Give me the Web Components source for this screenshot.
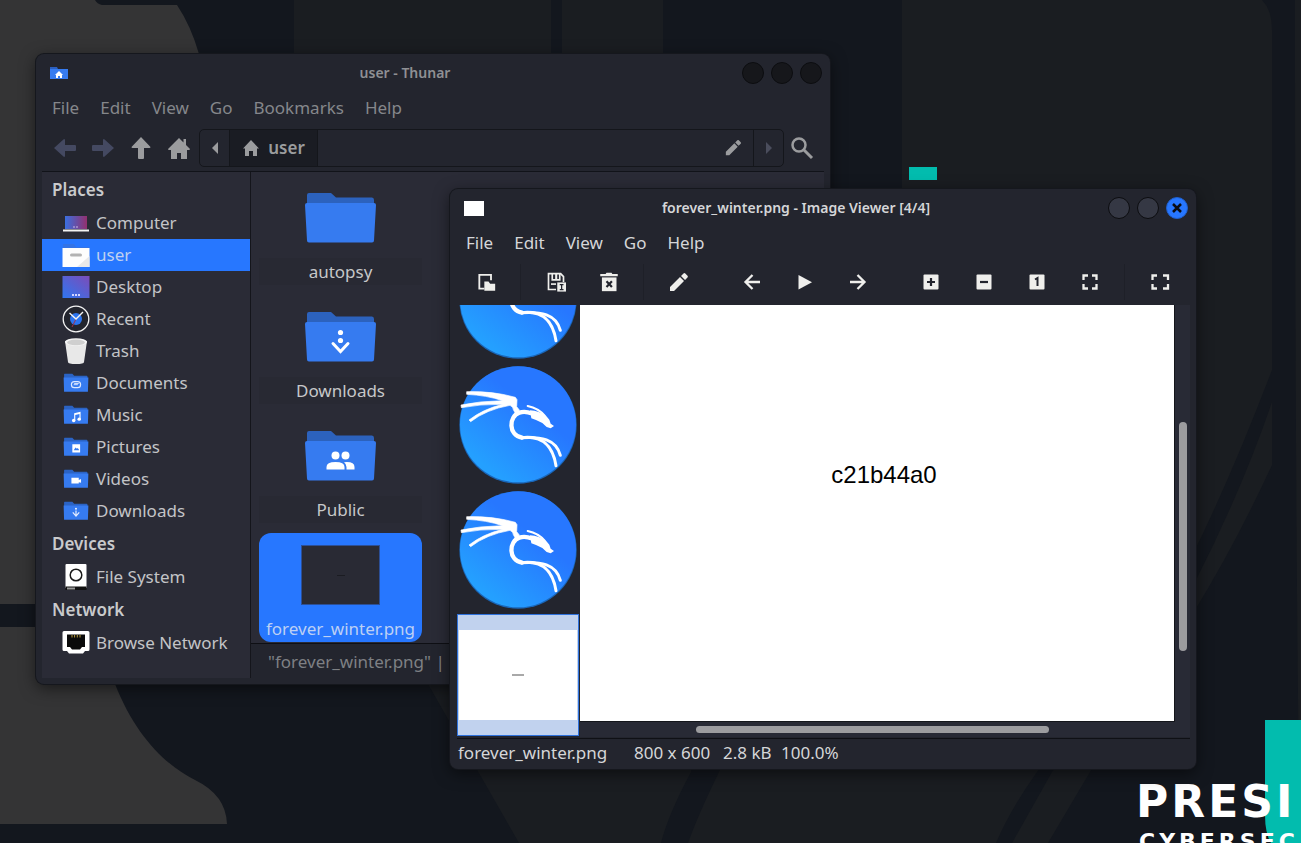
<!DOCTYPE html>
<html lang="en">
<head>
<meta charset="utf-8">
<title>Desktop</title>
<style>
  html, body { margin: 0; height: 100%; background: #13171e; }
  body { font: 17px/24px "Noto Sans", "Open Sans", sans-serif; color: #c9cacd; overflow: hidden; }
</style>
</head>
<body>
<desk-top>
  <desk-window slot="windows" class="files" inactive>
    <span slot="title">user - Thunar</span>
    <ui-icon slot="icon" name="home-folder" style="--w:18px;--h:16px"></ui-icon>
    <file-manager></file-manager>
  </desk-window>
  <desk-window slot="windows" class="viewer">
    <span slot="title">forever_winter.png - Image Viewer [4/4]</span>
    <ui-icon slot="icon" name="blank" style="--w:20px;--h:15px"></ui-icon>
    <image-viewer></image-viewer>
  </desk-window>
</desk-top>

<script>
const folder = (mark) => ['-1 -1 30 24', `
  <path d="M1 1.500Q1 1 1.500 1H10l2 2h13.500q1 0 1 1v6H1z" fill="#2b63c4"/>
  <path d="M.5 5h27L27 20.500H1z" fill="#367bf0"/>${mark}`];
const bigFolder = (mark) => ['0 0 71 50', `
  <path d="M2 2Q2 0 4 0H26L31 4.500H67Q69 4.500 69 7V16H2z" fill="#2c62bd"/>
  <path d="M0 12Q0 10 2 10H69Q71 10 71 12L69 47.500Q69 49.500 67 49.500H4Q2 49.500 2 47.500z" fill="#367bf0"/>${mark}`];

const ICONS = {
  'home-folder': ['0 0 18 16', '<path d="M0 2h7l1 2h10v4H0z" fill="#2b5fc0"/><path d="M0 4h18v10H0z" fill="#367bf0"/><path d="M9 6l4 4h-1v3h-2v-2H8v2H6v-3H5z" fill="#fff"/>'],
  'blank': ['0 0 20 15', '<path d="M0 0h20v15H0z" fill="#fff"/>'],
  'left': ['0 0 24 24', '<path d="M1 12L11 3q1 0 1 1v5h10q1 0 1 1v4q0 1-1 1H12v5q0 1-1 1z" fill="#444961"/>'],
  'right': ['0 0 24 24', '<path d="M23 12L13 3q-1 0-1 1v5H2q-1 0-1 1v4q0 1 1 1h10v5q0 1 1 1z" fill="#444961"/>'],
  'up': ['0 0 24 24', '<path d="M12 1l9.500 10q0 1-1 1H15v10q0 1-1 1h-4q-1 0-1-1V12H3.500q-1 0-1-1z" fill="currentColor"/>'],
  'home': ['0 0 24 24', '<path d="M12 2l4.500 4.500V3H19v6l4 4q0 1-1 1h-2v9h-6v-6h-4v6H4v-9H2q-1 0-1-1z" fill="currentColor"/>'],
  'house': ['0 0 18 18', '<path d="M9 1l8 8.500H15V17h-4v-5H7v5H3V9.500H1z" fill="currentColor"/>'],
  'tri-left': ['0 0 12 12', '<path d="M9 0v12L3 6z" fill="currentColor"/>'],
  'tri-right': ['0 0 12 12', '<path d="M3 0v12l6-6z" fill="currentColor"/>'],
  'pencil': ['0 0 20 20', '<path d="M1 15v4h4L15 9l-4-4zM12 4l4 4 2.500-2.500q.8-1 0-1.800L16.300 1.500q-1-.8-1.800 0z" fill="currentColor"/>'],
  'search': ['0 0 24 24', '<circle cx="9" cy="9" r="6.500" fill="none" stroke="currentColor" stroke-width="2.500"/><path d="M14 14l8 8" stroke="currentColor" stroke-width="3"/>'],
  'computer': ['0 0 28 28', '<defs><linearGradient id="g"><stop stop-color="#3a6fe0"/><stop offset="1" stop-color="#93306e"/></linearGradient></defs><path d="M3 7h22v13H3z" fill="url(#g)"/><path d="M1 20.500h26v2H1z" fill="#f3f3f3"/><path d="M11 17.500h2v1h-2zM14 17.500h2v1h-2z" fill="#c9b7e8"/>'],
  'user': ['0 2 28 28', '<path d="M1 5h11l2 3h13v3H1z" fill="#3373e6"/><path d="M.5 9h27v19H.5z" fill="#fdfdfd"/><path d="M27.500 17v11H15z" fill="#e9e9e9"/><rect x="8" y="14.500" width="12" height="3" rx="1.500" fill="#b3b3b3"/>'],
  'desktop': ['0 0 28 28', '<defs><linearGradient id="g" x1="0" y1="1" x2="1" y2="0"><stop stop-color="#2f76f0"/><stop offset="1" stop-color="#7c4cb8"/></linearGradient></defs><path d="M.5 3h27v22H.5z" fill="url(#g)"/><path d="M10 21h2v2h-2zM13 21h2v2h-2zM16 21h2v2h-2z" fill="#d6d6ff"/>'],
  'recent': ['0 0 28 28', '<circle cx="14" cy="14" r="12.800" fill="#23252e" stroke="#f4f4f4" stroke-width="1.300"/><circle cx="14" cy="14" r="6" fill="#2b74f0"/><path d="M14 14l-4 8" stroke="#a33048"/><path d="M7.500 8L14 14l7-7" fill="none" stroke="#f4f4f4" stroke-width="1.400"/>'],
  'trash': ['0 0 28 28', '<path d="M3 4l3 21q0 2 8 2t8-2L25 4z" fill="#e8e8e8"/><ellipse cx="14" cy="5" rx="11" ry="3.800" fill="#f5f5f5"/><ellipse cx="14" cy="5.400" rx="9" ry="2.800" fill="#cfcfcf"/>'],
  'documents': folder('<rect x="9" y="9.500" width="10" height="6.500" rx="3.200" fill="none" stroke="#dce8ff" stroke-width="1.300"/><path d="M11.500 12.800h4.500M12 11.500h5" stroke="#dce8ff"/>'),
  'music': folder('<path d="M12 9l7-1.500v8h-1.200V10l-4.600 1v6H12z" fill="#fff"/><circle cx="11.500" cy="17" r="1.900" fill="#fff"/><circle cx="17.500" cy="15.500" r="1.900" fill="#fff"/>'),
  'pictures': folder('<path d="M10 8h8.500v9H10z" fill="#fff"/><path d="M11.500 14.500l2-3 1.500 1.500 1-1 1.500 2.500z" fill="#367bf0"/>'),
  'videos': folder('<path d="M9 9.500h8V12l2.500-1v4L17 14.500V16H9z" fill="#fff"/>'),
  'downloads': folder('<circle cx="14" cy="8.500" r="1" fill="#fff"/><path d="M14 10.500v5M10.500 12.500L14 16.500l3.500-4" fill="none" stroke="#e6eeff" stroke-width="1.300"/>'),
  'disk': ['0 0 28 28', '<path d="M4.500 1h19q1 0 1 1v23h-21V2q0-1 1-1z" fill="#fff"/><circle cx="14" cy="12" r="5.800" fill="#fff" stroke="#1b1b1b" stroke-width="1.500"/><path d="M3.500 23.500h21V27h-21z" fill="#111"/><path d="M5 24.500h8v2H5z" fill="#999"/>'],
  'network': ['0 0 28 28', '<path d="M2 2h24q1.500 0 1.500 1.500v17q0 1.500-1.500 1.500h-3l-2 2.500H7L5 22H2Q.5 22 .5 20.500v-17Q.5 2 2 2z" fill="#fff"/><path d="M5 5.500h18V18h-3l-2 2.500h-8L8 18H5z" fill="#0a0a0a"/><path d="M10 6v2.500M12.600 6v2.500M15.300 6v2.500M18 6v2.500" stroke="#b79a3c"/>'],
  'big-folder': bigFolder(''),
  'big-downloads': bigFolder('<circle cx="35.500" cy="20.500" r="2.600" fill="#fff"/><circle cx="35.500" cy="28.500" r="2.600" fill="#fff"/><path d="M28 31.500l7.500 8 7.500-8" fill="none" stroke="#fff" stroke-width="3" stroke-linecap="round"/>'),
  'big-public': bigFolder('<circle cx="30.500" cy="24.500" r="4" fill="#fff"/><circle cx="40.500" cy="24.500" r="4" fill="#fff"/><path d="M21.500 38.500V36q0-5 9-5t9 5v2.500z" fill="#fff"/><path d="M41.500 38.500V36q0-3-2.500-4.800 10.500-1 10.500 4.800v2.500z" fill="#fff"/>'),
  'copy': ['0 0 24 24', '<path d="M10 20H4V3.500H18V10" fill="none" stroke="currentColor" stroke-width="2.200"/><path d="M10 11.500h5l2 2.500H23v8.500H10z" fill="currentColor"/>'],
  'save': ['0 0 24 24', '<path d="M2 1h16l4 4v7h-2V6l-3-3H4v17h8v2H2z" fill="currentColor"/><path d="M6.500 2v8.500h11V2h-2v6.500h-2V2h-2.500v6.500H8.500V2z" fill="currentColor"/><path d="M6 13.500h6v2H6z" fill="currentColor"/><path d="M13.500 12.500H24V23.500H13.500z" fill="currentColor"/><path d="M16.500 15H21M16.500 21H21M18.750 15v6" stroke="#23252e" stroke-width="1.500"/>'],
  'delete': ['0 0 24 24', '<path d="M1.500 2.500H8l1-1.500h6l1 1.500h6.500V5h-21z" fill="currentColor"/><path d="M3.500 6.500h17.500V23H3.500z" fill="currentColor"/><path d="M9 11l6.500 7M15.500 11L9 18" stroke="#23252e" stroke-width="2.600"/>'],
  'prev': ['0 0 24 24', '<path d="M20 12H6M12.500 5L5.500 12l7 7" fill="none" stroke="currentColor" stroke-width="2.300"/>'],
  'next': ['0 0 24 24', '<path d="M4 12h14M11.500 5l7 7-7 7" fill="none" stroke="currentColor" stroke-width="2.300"/>'],
  'play': ['0 0 24 24', '<path d="M5.500 5v14.500L19 12.200z" fill="currentColor"/>'],
  'plus': ['0 0 24 24', '<rect x="4.500" y="4.500" width="15" height="15" rx="1" fill="currentColor"/><path d="M8 12h8M12 8v8" stroke="#23252e" stroke-width="2.200"/>'],
  'minus': ['0 0 24 24', '<rect x="4.500" y="4.500" width="15" height="15" rx="1" fill="currentColor"/><path d="M8 12h8" stroke="#23252e" stroke-width="2.200"/>'],
  'one': ['0 0 24 24', '<rect x="4.500" y="4.500" width="15" height="15" rx="1" fill="currentColor"/><path d="M10 9.500l2.500-1.500v8" fill="none" stroke="#23252e" stroke-width="2"/>'],
  'fit': ['0 0 24 24', '<path d="M5.500 10V5.500H10M14 5.500h4.500V10M18.500 14v4.500H14M10 18.500H5.500V14" fill="none" stroke="currentColor" stroke-width="2.300"/>'],
  'full': ['0 0 24 24', '<path d="M4.500 10V5.500H9M15 5.500h5V10M20 14v4.500h-5M9 18.500H4.500V14" fill="none" stroke="currentColor" stroke-width="2.300"/>'],
  'dragon': ['21 13 366 366', `
    <defs><linearGradient id="g" x1=".2" y1=".85" x2=".6" y2=".35"><stop stop-color="#24a0ff"/><stop offset="1" stop-color="#2777ff"/></linearGradient></defs>
    <circle cx="204" cy="196" r="176" fill="#1a66b8"/><circle cx="204" cy="194" r="174" fill="url(#g)"/>
    <path d="M50 96Q130 94 196 113L201 120L200 141L208 151L199 166L190 150Q190 142 180 137Q108 150 62 186L57 181Q100 148 158 134Q90 133 34 144L33 136Q90 124 158 123Q110 107 50 104z" fill="#fff" stroke="#fff" stroke-width="2"/>
    <g fill="none" stroke="#fff" stroke-linecap="round">
      <path d="M272 176Q235 150 208 159C176 170 174 226 216 234" stroke-width="13"/>
      <path d="M214 234C272 230 318 238 331 287" stroke-width="9"/>
      <path d="M214 234C272 226 308 255 318 318" stroke-width="9"/>
      <path d="M233 139Q266 146 284 168" stroke-width="6"/>
    </g>
    <path d="M240 152Q268 154 288 168L298 180L302 192L312 199L302 206L290 202L277 190Q262 182 244 176z" fill="#fff"/>`],
};

const define = (name, html, setup) => {
  const template = document.createElement('template');
  template.innerHTML = html;
  customElements.define(name, class extends HTMLElement {
    connectedCallback() {
      if (this.shadowRoot) return;
      const root = this.attachShadow({ mode: 'open' });
      root.append(template.content.cloneNode(true));
      if (setup) setup(this, root);
    }
  });
};

define('ui-icon', `<style>
  :host { display: block; flex: none; width: var(--w, 24px); height: var(--h, var(--w, 24px)); }
  svg { display: block; width: 100%; height: 100%; }
</style><svg aria-hidden="true"></svg>`, (el, root) => {
  const [box, body] = ICONS[el.getAttribute('name')];
  const svg = root.querySelector('svg');
  svg.setAttribute('viewBox', box);
  svg.innerHTML = body;
});

define('menu-bar', `<style>
  :host { display: flex; gap: 21px; height: 32px; align-items: center; padding: 0 10px; }
  button { all: unset; cursor: default; }
</style>`, (el, root) => {
  for (const label of el.getAttribute('items').split(',')) {
    const b = document.createElement('button');
    b.textContent = label;
    root.append(b);
  }
});

define('desk-window', `<style>
  :host { box-sizing: border-box; display: flex; flex-direction: column; padding: 0 6px 6px; border-radius: 8px;
    background: #23252e; color: #d5d6d8; box-shadow: 0 0 0 1px #15171d, 0 4px 16px rgb(0 0 0 / .55); --ring: #0c0d10; --knob: #353844; }
  :host([inactive]) { color: #85878b; --knob: #16171b; }
  header { display: flex; align-items: center; height: 38px; padding: 0 2px 0 8px; }
  :host([inactive]) header { color: #8f9094; }
  h1 { flex: 1; margin: 0; text-align: center; font-size: 14px; line-height: 18px; font-weight: 600; }
  .knobs { display: flex; gap: 7px; }
  button { all: unset; display: grid; place-items: center; box-sizing: border-box; width: 22px; height: 22px; border: 1px solid var(--ring); border-radius: 50%; background: var(--knob); }
  :host(:not([inactive])) .close { background: #2777ff; border-color: #1f5fcc; }
  svg { display: block; width: 12px; height: 12px; }
  :host([inactive]) svg { display: none; }
  .body { flex: 1; min-height: 0; display: flex; flex-direction: column; }
</style>
<header><slot name="icon"></slot><h1><slot name="title"></slot></h1>
  <div class="knobs"><button aria-label="Minimize"></button><button aria-label="Maximize"></button>
  <button class="close" aria-label="Close"><svg viewBox="0 0 12 12"><path d="M2 2l8 8M10 2l-8 8" stroke="#0b0d12" stroke-width="2.500"/></svg></button></div>
</header><div class="body"><slot></slot></div>`);

define('place-item', `<style>
  :host { display: block; }
  a { display: flex; align-items: center; gap: 6px; height: 32px; padding-left: 20px; color: #c3c4c7; text-decoration: none; white-space: nowrap; }
  :host([selected]) a { background: #2777ff; color: #bfd0f0; }
</style><a href="#"><slot></slot></a>`, (el, root) => {
  const icon = document.createElement('ui-icon');
  const name = el.getAttribute('icon');
  icon.setAttribute('name', name);
  icon.style.setProperty('--w', '28px');
  if (ICONS[name][0] === '-1 -1 30 24') icon.style.setProperty('--h', '22px');
  root.querySelector('a').prepend(icon);
});

define('places-bar', `<style>
  :host { display: block; box-sizing: border-box; flex: 0 0 209px; padding-top: 1px; background: #2a2b36; border-right: 1px solid #14151b; }
  h2 { margin: 0; padding-left: 10px; font-size: 17px; line-height: 34px; font-weight: 600; color: #c9cacc; }
</style>
<h2>Places</h2>
<place-item icon="computer">Computer</place-item>
<place-item icon="user" selected>user</place-item>
<place-item icon="desktop">Desktop</place-item>
<place-item icon="recent">Recent</place-item>
<place-item icon="trash">Trash</place-item>
<place-item icon="documents">Documents</place-item>
<place-item icon="music">Music</place-item>
<place-item icon="pictures">Pictures</place-item>
<place-item icon="videos">Videos</place-item>
<place-item icon="downloads">Downloads</place-item>
<h2>Devices</h2>
<place-item icon="disk">File System</place-item>
<h2>Network</h2>
<place-item icon="network">Browse Network</place-item>`);

define('file-tile', `<style>
  :host { display: flex; flex-direction: column; align-items: center; height: 109px; border-radius: 12px; color: #c6c7c9; }
  :host([selected]) { background: #2777ff; color: #bdd0f4; }
  .art { flex: 1; display: grid; place-items: center; padding-top: 2px; }
  .label { align-self: stretch; height: 27px; line-height: 27px; text-align: center; white-space: nowrap; background: #282933; }
  :host([selected]) .label { background: none; }
</style><div class="art"><slot name="art"></slot></div><div class="label"><slot></slot></div>`);

define('file-manager', `<style>
  :host { flex: 1; display: flex; flex-direction: column; min-height: 0; }
  .tools { display: flex; align-items: center; height: 47px; padding: 0 10px 0 11px; border-bottom: 1px solid #111319; color: #9b9c9e; }
  button { all: unset; display: flex; align-items: center; justify-content: center; }
  .nav { display: flex; gap: 14px; }
  .path { flex: 1; display: flex; box-sizing: border-box; height: 38px; margin: 0 6px 0 8px; border: 1px solid #14161b; border-radius: 5px; }
  .path > * { border-right: 1px solid #14161b; }
  .path > :last-child { border-right: 0; }
  .step { width: 29px; }
  .crumb { gap: 8px; width: 87px; background: #1a1c23; font-weight: 600; }
  .entry { flex: 1; display: flex; align-items: center; justify-content: flex-end; padding-right: 11px; }
  .off { color: #4a4d5c; }
  .main { flex: 1; display: flex; min-height: 0; }
  .right { flex: 1; display: flex; flex-direction: column; min-width: 0; background: #2a2b36; }
  .files { flex: 1; display: grid; grid-template-columns: repeat(auto-fill, 163px); grid-auto-rows: 109px; gap: 10px; padding: 4px 8px 2px; overflow: hidden; }
  .status { box-sizing: border-box; height: 35px; border-top: 1px solid #0e0f14; background: #23252e; padding-left: 17px; line-height: 36px; white-space: pre; color: #7e8084; }
  .thumb { box-sizing: border-box; width: 79px; height: 60px; border: 1px solid #2c4f96; background: #292a34; display: grid; place-items: center; }
  .thumb i { width: 8px; height: 1px; background: #1b1c22; }
</style>
<menu-bar items="File,Edit,View,Go,Bookmarks,Help"></menu-bar>
<div class="tools">
  <div class="nav">
    <button aria-label="Back"><ui-icon name="left"></ui-icon></button>
    <button aria-label="Forward"><ui-icon name="right"></ui-icon></button>
    <button aria-label="Up"><ui-icon name="up"></ui-icon></button>
    <button aria-label="Home"><ui-icon name="home"></ui-icon></button>
  </div>
  <div class="path">
    <button class="step" aria-label="Earlier"><ui-icon name="tri-left" style="--w:12px"></ui-icon></button>
    <button class="crumb"><ui-icon name="house" style="--w:18px"></ui-icon><span>user</span></button>
    <div class="entry"><button aria-label="Edit location"><ui-icon name="pencil" style="--w:17px"></ui-icon></button></div>
    <button class="step off" aria-label="Later"><ui-icon name="tri-right" style="--w:12px"></ui-icon></button>
  </div>
  <button aria-label="Search"><ui-icon name="search"></ui-icon></button>
</div>
<div class="main">
  <places-bar></places-bar>
  <div class="right">
    <div class="files">
      <file-tile style="grid-column:1"><ui-icon slot="art" name="big-folder" style="--w:71px;--h:50px"></ui-icon>autopsy</file-tile>
      <file-tile style="grid-column:1"><ui-icon slot="art" name="big-downloads" style="--w:71px;--h:50px"></ui-icon>Downloads</file-tile>
      <file-tile style="grid-column:1"><ui-icon slot="art" name="big-public" style="--w:71px;--h:50px"></ui-icon>Public</file-tile>
      <file-tile style="grid-column:1" selected><div slot="art" class="thumb"><i></i></div>forever_winter.png</file-tile>
    </div>
    <div class="status">"forever_winter.png" |</div>
  </div>
</div>`);

define('image-viewer', `<style>
  :host { flex: 1; display: flex; flex-direction: column; min-height: 0; }
  .tools { display: flex; align-items: center; height: 46px; padding-left: 3px; color: #efefec; }
  button { all: unset; display: grid; place-items: center; width: 53px; height: 40px; }
  .sep { width: 17px; height: 36px; background: linear-gradient(#1e2028, #1e2028) center / 1px 100% no-repeat; }
  .gap { width: 20px; }
  .main { flex: 1; min-height: 0; display: grid; grid-template: minmax(0, 1fr) 15px / 124px minmax(0, 1fr) 15px; }
  .strip { grid-row: 1 / 3; display: flex; flex-direction: column; justify-content: flex-end; gap: 3px; overflow: hidden; padding: 0 1px 1px; }
  .strip > ui-icon { width: 122px; height: 122px; }
  .current { flex: none; box-sizing: border-box; height: 122px; padding: 15px 1px; border: 1px solid #2f72dc; background: #c1d2ee; display: grid; }
  .current div { background: #fff; display: grid; place-items: center; }
  .current i { width: 12px; height: 2px; background: #a9a9a9; }
  .canvas { background: #fff; color: #000; display: grid; place-items: center; border: solid #14161b; border-width: 0 1px 1px 0; font: 24px/28px "Liberation Sans", sans-serif; }
  .canvas p { margin: 0; padding: 0 0 76px 14px; }
  .v, .h { background: #282a35; display: grid; }
  .v { grid-template-rows: 28fr 55fr 17fr; padding: 0 3px 0 4px; }
  .v i { grid-row: 2; }
  .h { grid-column: 2 / 4; grid-template-columns: 116fr 352fr 141fr; padding: 4px 0; }
  .h i { grid-column: 2; }
  .v i, .h i { border-radius: 4px; background: #9c9c9f; }
  footer { display: grid; grid-template-columns: 176px 89px 58px auto; border-top: 1px solid #0f1015; margin: 1px 0 0 1px; height: 24px; line-height: 28px; padding-left: 1px; white-space: nowrap; }
</style>
<menu-bar items="File,Edit,View,Go,Help"></menu-bar>
<div class="tools">
  <button aria-label="Open"><ui-icon name="copy" style="--w:20px"></ui-icon></button><span class="sep"></span>
  <button aria-label="Save a copy"><ui-icon name="save" style="--w:20px"></ui-icon></button>
  <button aria-label="Delete"><ui-icon name="delete" style="--w:20px"></ui-icon></button><span class="sep"></span>
  <button aria-label="Edit"><ui-icon name="pencil" style="--w:20px"></ui-icon></button><span class="gap"></span>
  <button aria-label="Previous"><ui-icon name="prev"></ui-icon></button>
  <button aria-label="Play"><ui-icon name="play"></ui-icon></button>
  <button aria-label="Next"><ui-icon name="next"></ui-icon></button><span class="gap"></span>
  <button aria-label="Zoom in"><ui-icon name="plus"></ui-icon></button>
  <button aria-label="Zoom out"><ui-icon name="minus"></ui-icon></button>
  <button aria-label="Normal size"><ui-icon name="one"></ui-icon></button>
  <button aria-label="Best fit"><ui-icon name="fit"></ui-icon></button><span class="sep"></span>
  <button aria-label="Fullscreen"><ui-icon name="full"></ui-icon></button>
</div>
<div class="main">
  <div class="strip">
    <ui-icon name="dragon"></ui-icon><ui-icon name="dragon"></ui-icon><ui-icon name="dragon"></ui-icon>
    <div class="current"><div><i></i></div></div>
  </div>
  <div class="canvas"><p>c21b44a0</p></div>
  <div class="v"><i></i></div>
  <div class="h"><i></i></div>
</div>
<footer><span>forever_winter.png</span><span>800 x 600</span><span>2.8 kB</span><span>100.0%</span></footer>`);

define('desk-top', `<style>
  :host { display: block; position: relative; height: 100%; overflow: hidden; background: #13171e; }
  .paper { position: absolute; left: 0; top: 0; width: 1301px; height: 843px; }
  .brand { position: absolute; left: 1136px; top: 776px; color: #fff; font: 700 44px/52px "DejaVu Sans", sans-serif; letter-spacing: 3px; white-space: nowrap; }
  .brand small { display: block; padding-left: 3px; font-size: 22px; line-height: 28px; letter-spacing: 4px; }
  ::slotted(.files) { position: absolute; left: 36px; right: 471px; top: 54px; bottom: 159px; }
  ::slotted(.viewer) { position: absolute; left: 450px; right: 105px; top: 189px; bottom: 74px; }
</style>
<svg class="paper" viewBox="0 0 1301 843" aria-hidden="true">
  <g fill="#343435">
    <path d="M0 0H95Q97 4 102 5H177Q191 26 199 54L220 300V604H0z"/>
    <path d="M0 627H100L115 684C135 735 165 765 195 780Q226 795 227 824H0z"/>
  </g>
  <g fill="#1a1d21">
    <path d="M294 0H551V200H294zM562 0H663V200H562z"/>
    <path d="M902 0H1262Q1272 10 1272 30V370Q1230 480 1190 560L1037 772Q1010 810 996 843H688Q698 815 719 772L902 400z"/>
    <path d="M1272 402V465Q1235 545 1195 610L1090 772L1048 843H1012L1052 772L1195 582Q1242 490 1272 402z"/>
    <path d="M428 684L519 843H661Q668 815 691 772V600H428z"/>
    <path d="M1295 0h6v843h-1q-5-300-5-843z"/>
  </g>
  <path d="M909 167h28v13h-28zM1265 720h36v123h-30q-6-10-6-28z" fill="#02bcae"/>
</svg>
<div class="brand">PRESI<small>CYBERSEC</small></div>
<slot name="windows"></slot>`);
</script>
</body>
</html>
